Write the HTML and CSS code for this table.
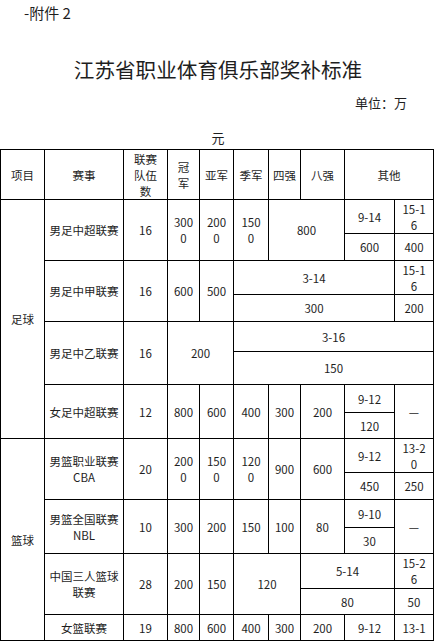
FILE: index.html
```html
<!DOCTYPE html>
<html lang="zh-CN">
<head>
<meta charset="utf-8">
<title>江苏省职业体育俱乐部奖补标准</title>
<link rel="stylesheet" href="styles.css">
</head>
<body>
<div class="page">
  <div class="annex">-附件 2</div>
  <h1 class="title">江苏省职业体育俱乐部奖补标准</h1>
  <div class="unit">单位：万</div>
  <div class="yuan">元</div>
  <table class="grid">
    <colgroup>
      <col class="w1"><col class="w2"><col class="w3"><col class="w4"><col class="w5">
      <col class="w6"><col class="w7"><col class="w8"><col class="w9"><col class="w10">
    </colgroup>
    <tbody>
      <tr>
        <td>项目</td><td>赛事</td><td>联赛<br>队伍<br>数</td><td>冠<br>军</td><td>亚军</td>
        <td>季军</td><td>四强</td><td>八强</td><td colspan="2">其他</td>
      </tr>
      <tr>
        <td rowspan="8">足球</td><td rowspan="2">男足中超联赛</td><td rowspan="2">16</td>
        <td rowspan="2">300<br>0</td><td rowspan="2">200<br>0</td><td rowspan="2">150<br>0</td>
        <td rowspan="2" colspan="2">800</td><td>9-14</td><td>15-1<br>6</td>
      </tr>
      <tr><td>600</td><td>400</td></tr>
      <tr>
        <td rowspan="2">男足中甲联赛</td><td rowspan="2">16</td><td rowspan="2">600</td><td rowspan="2">500</td>
        <td colspan="4">3-14</td><td>15-1<br>6</td>
      </tr>
      <tr><td colspan="4">300</td><td>200</td></tr>
      <tr>
        <td rowspan="2">男足中乙联赛</td><td rowspan="2">16</td><td rowspan="2" colspan="2">200</td>
        <td colspan="5">3-16</td>
      </tr>
      <tr><td colspan="5">150</td></tr>
      <tr>
        <td rowspan="2">女足中超联赛</td><td rowspan="2">12</td><td rowspan="2">800</td><td rowspan="2">600</td>
        <td rowspan="2">400</td><td rowspan="2">300</td><td rowspan="2">200</td><td>9-12</td><td rowspan="2">—</td>
      </tr>
      <tr><td>120</td></tr>
      <tr>
        <td rowspan="7">篮球</td><td rowspan="2">男篮职业联赛<br>CBA</td><td rowspan="2">20</td>
        <td rowspan="2">200<br>0</td><td rowspan="2">150<br>0</td><td rowspan="2">120<br>0</td>
        <td rowspan="2">900</td><td rowspan="2">600</td><td>9-12</td><td>13-2<br>0</td>
      </tr>
      <tr><td>450</td><td>250</td></tr>
      <tr>
        <td rowspan="2">男篮全国联赛<br>NBL</td><td rowspan="2">10</td><td rowspan="2">300</td><td rowspan="2">200</td>
        <td rowspan="2">150</td><td rowspan="2">100</td><td rowspan="2">80</td><td>9-10</td><td rowspan="2">—</td>
      </tr>
      <tr><td>30</td></tr>
      <tr>
        <td rowspan="2">中国三人篮球<br>联赛</td><td rowspan="2">28</td><td rowspan="2">200</td><td rowspan="2">150</td>
        <td rowspan="2" colspan="2">120</td><td colspan="2">5-14</td><td>15-2<br>6</td>
      </tr>
      <tr><td colspan="2">80</td><td>50</td></tr>
      <tr>
        <td>女篮联赛</td><td>19</td><td>800</td><td>600</td><td>400</td><td>300</td><td>200</td><td>9-12</td><td>13-1</td>
      </tr>
    </tbody>
  </table>
</div>
</body>
</html>
```
FILE: styles.css
```css
html, body {
  margin: 0;
  padding: 0;
  background: #fff;
}
body {
  font-family: "Noto Sans CJK SC", "Noto Sans", sans-serif;
  color: #1e1e1e;
}
.page {
  width: 436px;
}
.annex {
  padding: 3px 0 0 24px;
  height: 20px;
  line-height: 20px;
  font-size: 15px;
}
.title {
  margin: 32px 0 0 0;
  height: 28px;
  line-height: 28px;
  font-size: 20.6px;
  font-weight: normal;
  text-align: center;
}
.unit {
  margin-top: 11px;
  height: 18px;
  line-height: 18px;
  font-size: 13px;
  text-align: right;
  padding-right: 29px;
}
.yuan {
  margin-top: 17px;
  height: 18px;
  line-height: 18px;
  font-size: 13px;
  text-align: center;
}
.grid {
  margin-top: 2px;
  border-collapse: collapse;
  table-layout: fixed;
  width: 433px;
  font-size: 11.5px;
  line-height: 16px;
}
.grid td {
  border: 1px solid #000;
  padding: 0;
  text-align: center;
  vertical-align: middle;
  white-space: nowrap;
  overflow: hidden;
}
.w1 { width: 44px; }
.w2 { width: 79px; }
.w3 { width: 44px; }
.w4 { width: 32px; }
.w5 { width: 34px; }
.w6 { width: 35px; }
.w7 { width: 32px; }
.w8 { width: 44px; }
.w9 { width: 50px; }
.w10 { width: 39px; }
.grid tr:nth-child(1) { height: 50px; }
.grid tr:nth-child(2) { height: 34px; }
.grid tr:nth-child(3) { height: 27px; }
.grid tr:nth-child(4) { height: 34px; }
.grid tr:nth-child(5) { height: 27px; }
.grid tr:nth-child(6) { height: 30px; }
.grid tr:nth-child(7) { height: 33px; }
.grid tr:nth-child(8) { height: 28px; }
.grid tr:nth-child(9) { height: 26px; }
.grid tr:nth-child(10) { height: 34px; }
.grid tr:nth-child(11) { height: 27px; }
.grid tr:nth-child(12) { height: 28px; }
.grid tr:nth-child(13) { height: 26px; }
.grid tr:nth-child(14) { height: 35px; }
.grid tr:nth-child(15) { height: 26px; }
.grid tr:nth-child(16) { height: 26px; }
```
